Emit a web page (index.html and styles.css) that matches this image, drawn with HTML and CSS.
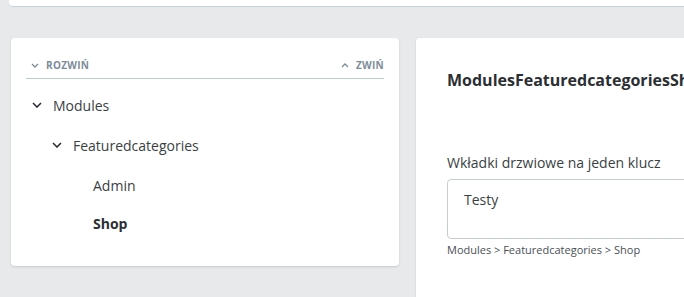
FILE: index.html
```html
<!DOCTYPE html>
<html>
<head>
	<title>Kategorie</title>
	<link rel="stylesheet" href="styles.css">
</head>
<body>
	<!-- top panel, mostly scrolled out of view -->
	<div class="top-panel"></div>

	<div class="columns">
		<!-- category tree -->
		<div class="card tree-card">
			<div class="tree-tools">
				<span class="tool">
					<svg width="8" height="5" viewBox="0 0 8 5"><path d="M1 1l3 3 3-3" fill="none" stroke="#7d8c99" stroke-width="1.3"/></svg>
					ROZWIŃ
				</span>
				<span class="tool">
					<svg width="8" height="5" viewBox="0 0 8 5"><path d="M1 4l3-3 3 3" fill="none" stroke="#7d8c99" stroke-width="1.3"/></svg>
					ZWIŃ
				</span>
			</div>
			<ul class="tree">
				<li class="node level-0">
					<svg class="caret" width="10" height="6" viewBox="0 0 10 6"><path d="M1 1l4 4 4-4" fill="none" stroke="#2b2f33" stroke-width="1.6"/></svg>
					<span>Modules</span>
				</li>
				<li class="node level-1">
					<svg class="caret" width="10" height="6" viewBox="0 0 10 6"><path d="M1 1l4 4 4-4" fill="none" stroke="#2b2f33" stroke-width="1.6"/></svg>
					<span>Featuredcategories</span>
				</li>
				<li class="node level-2">
					<span>Admin</span>
				</li>
				<li class="node level-2 active">
					<span>Shop</span>
				</li>
			</ul>
		</div>

		<!-- details -->
		<div class="card detail-card">
			<h2 class="detail-title">ModulesFeaturedcategoriesShop</h2>
			<label class="field-label">Wkładki drzwiowe na jeden klucz</label>
			<div class="field-box">Testy</div>
			<div class="crumbs">Modules &gt; Featuredcategories &gt; Shop</div>
		</div>
	</div>
</body>
</html>
```

FILE: styles.css
```css
body {
	margin: 0;
	background-color: #e8e9eb;
	font-family: "Open Sans", "Noto Sans", sans-serif;
	color: #333a40;
	overflow: hidden;
}

.top-panel {
	margin-left: 9px;
	height: 6px;
	background-color: white;
	border-bottom: 1px solid #c3d2d5;
	border-bottom-left-radius: 4px;
}

.columns {
	display: flex;
	gap: 17px;
	margin-top: 31px;
	padding-left: 11px;
	align-items: flex-start;
}

.card {
	background-color: white;
	border-radius: 4px;
	box-shadow: 0 1px 2px rgba(150, 170, 175, 0.45);
}

.tree-card {
	flex: 0 0 388px;
	height: 228px;
	padding: 0 15px;
	box-sizing: border-box;
}

.tree-tools {
	display: flex;
	justify-content: space-between;
	align-items: center;
	height: 41px;
	padding-top: 14px;
	box-sizing: border-box;
	border-bottom: 1.5px solid #b9cdd1;
	font-size: 10px;
	font-weight: 700;
	letter-spacing: 0.3px;
	color: #7d8c99;
}

.tool {
	display: flex;
	align-items: center;
	gap: 7px;
}

.tool:first-child {
	padding-left: 5px;
}

.tree {
	list-style: none;
	margin: 0;
	padding: 6px 0 0 0;
}

.node {
	display: flex;
	align-items: center;
	height: 40px;
	font-size: 14px;
	color: #3a3f44;
}

.node .caret {
	margin-right: 11px;
}

.level-0 {
	padding-left: 6px;
}

.level-1 {
	padding-left: 26px;
}

.level-2 {
	padding-left: 67px;
}

.node.active {
	height: 36px;
	font-weight: 700;
	color: #2b2f33;
}

.detail-card {
	flex: 0 0 400px;
	height: 280px;
	padding: 29px 0 0 31px;
	box-sizing: border-box;
}

.detail-title {
	margin: 0;
	font-size: 16px;
	font-weight: 700;
	color: #2b2f33;
	white-space: nowrap;
	line-height: 26px;
}

.field-label {
	display: block;
	margin-top: 59px;
	font-size: 14px;
	color: #3a3f44;
	line-height: 21px;
}

.field-box {
	margin-top: 6px;
	height: 60px;
	border: 1px solid #c4ccd4;
	border-radius: 4px;
	padding: 10px 16px 8px;
	box-sizing: border-box;
	font-size: 14px;
	color: #3a3f44;
}

.crumbs {
	margin-top: 3px;
	font-size: 11px;
	color: #4a5056;
}
```
